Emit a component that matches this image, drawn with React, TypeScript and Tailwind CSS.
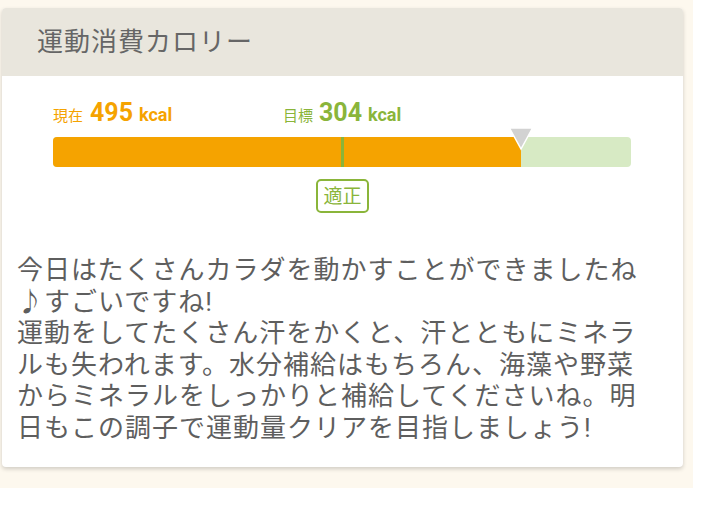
import React from "react";

const CURRENT = 495;
const TARGET = 304;
const MAX = 611;
const BAR_W = 578;

function CalorieBar() {
  const fillW = Math.round((CURRENT / MAX) * BAR_W);
  const markW = Math.round((TARGET / MAX) * BAR_W);

  return (
    <div className="pl-[51px] pt-[24px]">
      <div className="flex items-baseline h-[26px]">
        <div className="flex items-baseline text-[#f5a300] w-[230px]">
          <span className="text-[15px] mr-[7px]">現在</span>
          <span className="text-[25px] font-bold leading-none">{CURRENT}</span>
          <span className="text-[18px] font-bold ml-[6px]">kcal</span>
        </div>
        <div className="flex items-baseline text-[#8ab53a]">
          <span className="text-[15px] mr-[6px]">目標</span>
          <span className="text-[25px] font-bold leading-none">{TARGET}</span>
          <span className="text-[18px] font-bold ml-[6px]">kcal</span>
        </div>
      </div>
      <div className="relative mt-[11px] w-[578px] h-[30px] rounded-[4px] bg-[#d7eac4] flex">
        <div className="h-full bg-[#f5a300] rounded-l-[4px]" style={{ width: fillW }} />
        <div className="absolute top-0 h-full w-[3px] bg-[#8ab53a]" style={{ left: markW }} />
        <svg
          className="absolute top-[-10px]"
          style={{ left: fillW - 13 }}
          width="26"
          height="24"
          viewBox="0 0 26 24"
        >
          <polygon points="1.5,1 24.5,1 13,22" fill="#d2d2d2" stroke="#ffffff" strokeWidth="1.5" />
        </svg>
      </div>
      <div className="mt-[12px] pl-[263px]">
        <span className="inline-flex items-center justify-center w-[53px] h-[34px] border-2 border-[#8ab53a] rounded-[5px] text-[#8ab53a] text-[19px] leading-none">
          適正
        </span>
      </div>
    </div>
  );
}

export default function App() {
  return (
    <div
      className="w-[693px] h-[488px] bg-[#fdf8ee] pt-[8px] pl-[2px]"
      style={{ fontFamily: 'Roboto, "Noto Sans CJK JP", sans-serif' }}
    >
      <div className="w-[681px] h-[459px] bg-white rounded-[4px] shadow-[0_2px_4px_rgba(0,0,0,0.18)] overflow-hidden">
        <div className="h-[68px] bg-[#e9e6dd] flex items-center pl-[35px]">
          <h2 className="text-[26px] tracking-[1px] text-[#666666] font-normal">運動消費カロリー</h2>
        </div>
        <CalorieBar />
        <p className="mt-[42px] ml-[15px] w-[630px] text-[26px] leading-[31.5px] tracking-[1px] text-[#5e5e5e]">
          今日はたくさんカラダを動かすことができましたね♪すごいですね!
          <br />
          運動をしてたくさん汗をかくと、汗とともにミネラルも失われます。水分補給はもちろん、海藻や野菜からミネラルをしっかりと補給してくださいね。明日もこの調子で運動量クリアを目指しましょう!
        </p>
      </div>
    </div>
  );
}
